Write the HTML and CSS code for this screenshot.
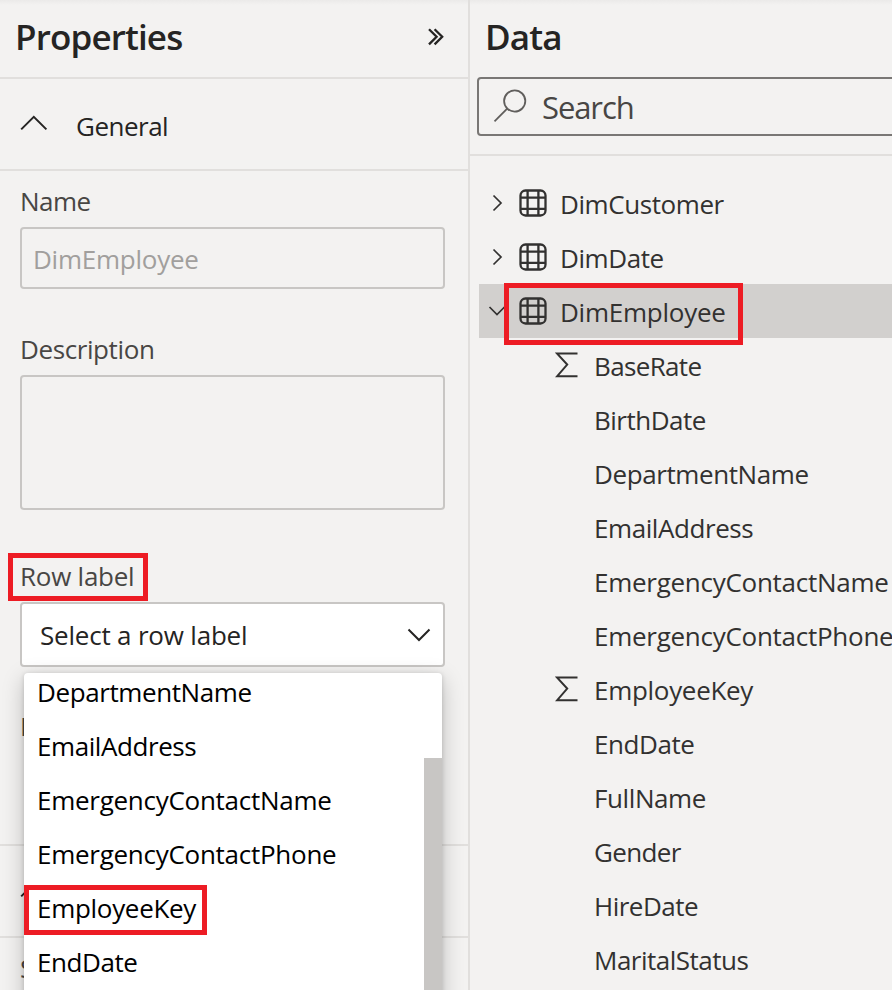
FILE: index.html
```html
<!DOCTYPE html>
<html lang="en">
<head>
<meta charset="utf-8">
<title>Properties and Data</title>
<link rel="stylesheet" href="styles.css">
</head>
<body>
<svg class="defs" aria-hidden="true">
  <symbol id="table" viewBox="0 0 28 28"><rect x="1.5" y="1.5" width="25" height="25" rx="5"/><path d="M8.6 1.5v25M19.4 1.5v25M1.5 8.6h25M1.5 19.9h25"/></symbol>
  <symbol id="sigma" viewBox="0 0 24 26"><path d="M22.5 1.6H2.2L12.2 12.6 2.2 24.2H22.5"/></symbol>
</svg>
<main class="app">
  <section class="properties">
    <header class="panel-head"><h1 class="w-prop">Properties</h1>
      <svg class="collapse" viewBox="0 0 18 18"><path d="M2 1.2 9.6 8.8 2 16.4M7.6 1.2 15.2 8.8 7.6 16.4"/></svg>
    </header>
    <div class="group-head">
      <svg class="chev-up" viewBox="0 0 28 16"><path d="M1.2 14.4 13.8 1.8 26.4 14.4"/></svg>
      <span class="general">General</span>
    </div>
    <div class="form">
      <label class="label">Name</label>
      <div class="input name-value t-emp">DimEmployee</div>
      <label class="label desc-label">Description</label>
      <div class="input area"></div>
      <label class="label row-label">Row label</label>
      <div class="row-select"><span class="select-text">Select a row label</span>
        <svg class="chev-down" viewBox="0 0 24 14"><path d="M1.5 1.5 12 12 22.5 1.5"/></svg>
      </div>
      <label class="label key-label">K</label>
    </div>
    <div class="group-head second">
      <svg class="chev-up" viewBox="0 0 28 16"><path d="M1.2 14.4 13.8 1.8 26.4 14.4"/></svg>
    </div>
    <label class="label storage">S</label>
    <div class="dropdown">
      <ul class="options">
        <li><span class="t-dept">DepartmentName</span></li>
        <li><span class="t-email">EmailAddress</span></li>
        <li><span class="t-ecn">EmergencyContactName</span></li>
        <li><span class="t-ecp">EmergencyContactPhone</span></li>
        <li class="marked"><span class="t-key">EmployeeKey</span></li>
        <li><span class="t-end">EndDate</span></li>
      </ul>
      <div class="scrollbar"></div>
    </div>
  </section>
  <section class="data">
    <header class="data-head"><h1 class="w-data">Data</h1></header>
    <div class="search">
      <svg class="lens" viewBox="0 0 34 34"><circle cx="21.7" cy="12" r="10.6"/><path d="M14.2 19.6 1.5 32.4"/></svg>
      <span class="search-text">Search</span>
    </div>
    <div class="tree">
      <div class="row table-row"><svg class="arrow" viewBox="0 0 18 18"><path d="M5.5 1.5 13 9 5.5 16.5"/></svg><svg class="table-icon"><use href="#table"/></svg><span class="t-cust">DimCustomer</span></div>
      <div class="row table-row"><svg class="arrow" viewBox="0 0 18 18"><path d="M5.5 1.5 13 9 5.5 16.5"/></svg><svg class="table-icon"><use href="#table"/></svg><span class="t-cust">DimDate</span></div>
      <div class="row table-row selected"><svg class="arrow" viewBox="0 0 18 18"><path d="M1.5 5 9 12.5 16.5 5"/></svg><svg class="table-icon"><use href="#table"/></svg><span class="t-emp">DimEmployee</span></div>
      <div class="row"><svg class="sigma"><use href="#sigma"/></svg><span class="t-base">BaseRate</span></div>
      <div class="row field"><span>BirthDate</span></div>
      <div class="row field"><span class="t-dept">DepartmentName</span></div>
      <div class="row field"><span class="t-email">EmailAddress</span></div>
      <div class="row field"><span class="t-ecn">EmergencyContactName</span></div>
      <div class="row field"><span class="t-ecp">EmergencyContactPhone</span></div>
      <div class="row"><svg class="sigma"><use href="#sigma"/></svg><span class="t-key">EmployeeKey</span></div>
      <div class="row field"><span class="t-end">EndDate</span></div>
      <div class="row field"><span class="t-full">FullName</span></div>
      <div class="row field"><span class="t-gender">Gender</span></div>
      <div class="row field"><span>HireDate</span></div>
      <div class="row field"><span>MaritalStatus</span></div>
    </div>
  </section>
</main>
</body>
</html>
```
FILE: styles.css
```css
*, *::before, *::after { box-sizing: border-box; }
html, body { margin: 0; height: 990px; overflow: hidden; }
body { font: 26px/54px "Open Sans", "Noto Sans", sans-serif; letter-spacing: -0.5px; color: #323130; background: #f3f2f1; white-space: nowrap; }
svg { fill: none; stroke: #252423; stroke-width: 2; flex: none; display: block; }
.defs { position: absolute; width: 0; height: 0; }
h1 { margin: 0; font-size: 35px; line-height: 48px; font-weight: 600; color: #252423; letter-spacing: -0.85px; }
.app { display: grid; grid-template-columns: 470px 422px; height: 990px; overflow: hidden; background: linear-gradient(#ebeae9, #f3f2f1 5px); }

.t-emp { letter-spacing: -0.25px; }
.t-cust, .t-email, .t-end { letter-spacing: -0.42px; }
.t-dept, .t-full { letter-spacing: -0.4px; }
.t-ecn, .t-ecp { letter-spacing: -0.27px; }
.t-key { letter-spacing: -0.3px; }
.t-base, .t-gender { letter-spacing: -0.65px; }

.properties { position: relative; height: 990px; border-right: 2px solid #e1dfdd; overflow: hidden; }
.panel-head { display: flex; justify-content: space-between; align-items: flex-start; height: 79px; padding: 13px 23px 0 15px; border-bottom: 2px solid #e1dfdd; }
.collapse { width: 18px; height: 18px; margin-top: 15px; stroke-width: 2.3; }
.group-head { display: flex; align-items: center; height: 92px; padding-left: 20px; border-bottom: 2px solid #e1dfdd; color: #252423; }
.chev-up { width: 28px; height: 16px; margin-right: 28px; margin-bottom: 2px; }
.general { padding-top: 3px; }
.form { height: 673px; padding: 10px 23px 0 20px; }
.label { display: block; height: 40px; line-height: 40px; color: #484644; }
.input { height: 62px; margin-top: 6px; border: 2px solid #c8c6c4; border-radius: 4px; }
.name-value { padding-left: 11px; line-height: 60px; color: #a19f9d; }
.desc-label { margin-top: 40px; letter-spacing: -0.4px; }
.area { height: 135px; }
.row-label { width: 140px; height: 48px; margin: 43px 0 1px -12px; padding-left: 7px; border: 5px solid #ed1c24; line-height: 36px; letter-spacing: -0.25px; }
.row-select { display: flex; align-items: center; justify-content: space-between; height: 65px; padding: 0 12px 0 18px; background: #fff; border: 2px solid #c8c6c4; border-radius: 4px; color: #252423; }
.select-text { letter-spacing: -0.2px; }
.chev-down { width: 24px; height: 14px; }
.key-label { margin-top: 39px; }
.second { border-top: 2px solid #e1dfdd; height: 94px; }
.storage { margin: 10px 20px; }
.dropdown { position: absolute; top: 673px; left: 24px; width: 418px; height: 340px; display: flex; align-items: flex-start; justify-content: space-between; background: #fff; border-radius: 4px; box-shadow: 0 6px 22px rgba(0,0,0,.22), 0 1px 5px rgba(0,0,0,.16); }
.options { margin: -8px 0 0; padding: 0; list-style: none; color: #000; }
.options li { height: 54px; padding-left: 13px; }
.options .marked { width: 183px; height: 50px; margin: 4px 0 0; padding-left: 8px; line-height: 37px; border: 5px solid #ed1c24; }
.scrollbar { width: 18px; height: 260px; margin-top: 85px; background: #c8c6c4; }

.data { overflow: hidden; }
.data-head { height: 77px; padding: 13px 0 0 15px; }
.search { display: flex; align-items: center; width: 430px; height: 59px; margin-left: 7px; padding-left: 14px; border: 2px solid #797775; border-radius: 4px; font-size: 31px; letter-spacing: -1.1px; color: #484644; }
.lens { width: 34px; height: 34px; margin: -1px 15px 0 0; stroke: #605e5c; stroke-width: 1.8; }
.search-text { padding-top: 0; }
.tree { margin-top: 18px; padding: 20px 0 0 9px; border-top: 2px solid #e1dfdd; }
.row { display: flex; align-items: center; height: 54px; padding-left: 76px; }
.row span { padding-top: 2px; }
.row.field { padding-left: 115px; }
.row.table-row { padding-left: 9px; }
.arrow { width: 18px; height: 18px; margin-right: 13px; stroke: #323130; stroke-width: 1.7; }
.table-icon { width: 28px; height: 28px; margin-right: 13px; stroke: #323130; stroke-width: 2.3; }
.sigma { width: 24px; height: 26px; margin: -1px 15px 0 0; stroke: #323130; stroke-width: 2; }
.selected { position: relative; background: #d2d0ce; }
.selected::after { content: ""; position: absolute; left: 25px; top: -1px; width: 239px; height: 62px; border: 5px solid #ed1c24; }
```
